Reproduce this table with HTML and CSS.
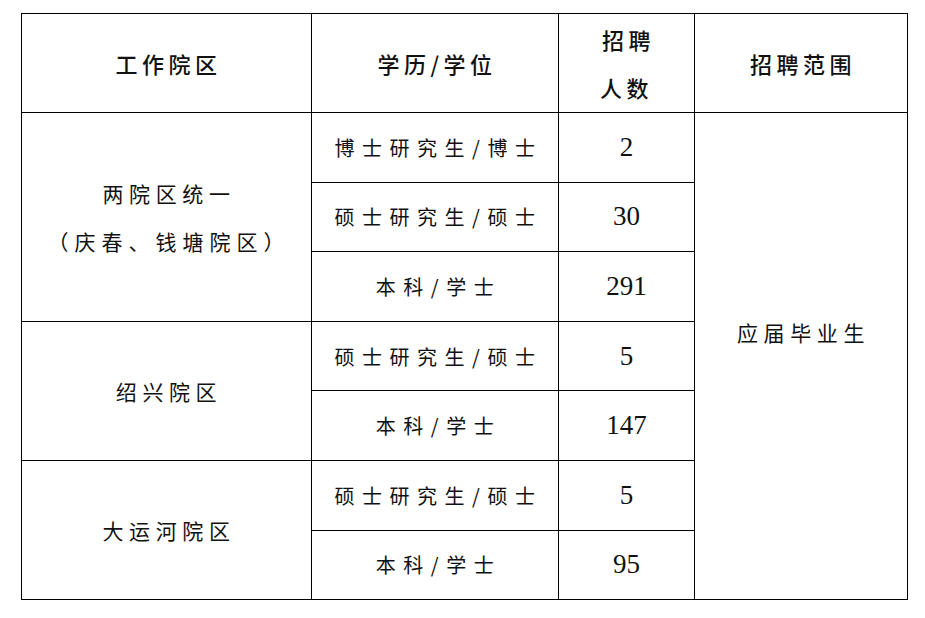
FILE: index.html
```html
<!DOCTYPE html>
<html lang="zh">
<head>
<meta charset="utf-8">
<link rel="stylesheet" href="styles.css">
</head>
<body>
<table class="grid">
  <colgroup>
    <col class="c1"><col class="c2"><col class="c3"><col class="c4">
  </colgroup>
  <thead>
    <tr class="head">
      <th>工作院区</th>
      <th>学历/学位</th>
      <th class="two">招聘<br>人数</th>
      <th>招聘范围</th>
    </tr>
  </thead>
  <tbody>
    <tr>
      <td rowspan="3" class="area two">两院区统一<br><span class="paren">（庆春、钱塘院区）</span></td>
      <td class="deg">博士研究生/博士</td>
      <td class="num">2</td>
      <td rowspan="7" class="scope">应届毕业生</td>
    </tr>
    <tr><td class="deg">硕士研究生/硕士</td><td class="num">30</td></tr>
    <tr><td class="deg">本科/学士</td><td class="num">291</td></tr>
    <tr>
      <td rowspan="2" class="area">绍兴院区</td>
      <td class="deg">硕士研究生/硕士</td><td class="num">5</td>
    </tr>
    <tr><td class="deg">本科/学士</td><td class="num">147</td></tr>
    <tr>
      <td rowspan="2" class="area">大运河院区</td>
      <td class="deg">硕士研究生/硕士</td><td class="num">5</td>
    </tr>
    <tr><td class="deg">本科/学士</td><td class="num">95</td></tr>
  </tbody>
</table>
</body>
</html>
```

FILE: styles.css
```css
html, body {
  margin: 0;
  padding: 0;
  background: #fff;
}
body {
  padding: 13px 0 0 21px;
  color: #111;
  font-family: "Noto Sans CJK SC", "Noto Sans", sans-serif;
}
.grid {
  border-collapse: collapse;
  table-layout: fixed;
  width: 886px;
}
.c1 { width: 290px; }
.c2 { width: 247px; }
.c3 { width: 136px; }
.c4 { width: 213px; }
.grid th, .grid td {
  border: 1.3px solid #000;
  padding: 0;
  text-align: center;
  vertical-align: middle;
}
.head { height: 99px; }
.head th {
  font-size: 22px;
  font-weight: 500;
  letter-spacing: 4.5px;
  line-height: 48px;
  text-indent: 4px;
}
tbody tr { height: 69.6px; }
.deg {
  font-size: 20px;
  font-weight: 400;
  letter-spacing: 7.5px;
  text-indent: 7px;
}
.grid .area {
  font-size: 21px;
  letter-spacing: 5.6px;
  line-height: 48px;
  padding-left: 5px;
}
.paren { letter-spacing: 6px; }
.grid .scope {
  font-size: 21px;
  letter-spacing: 5.6px;
  padding-left: 5px;
  padding-bottom: 48px;
}
.num {
  font-family: "Liberation Serif", "Times New Roman", serif;
  font-size: 27px;
}
```
